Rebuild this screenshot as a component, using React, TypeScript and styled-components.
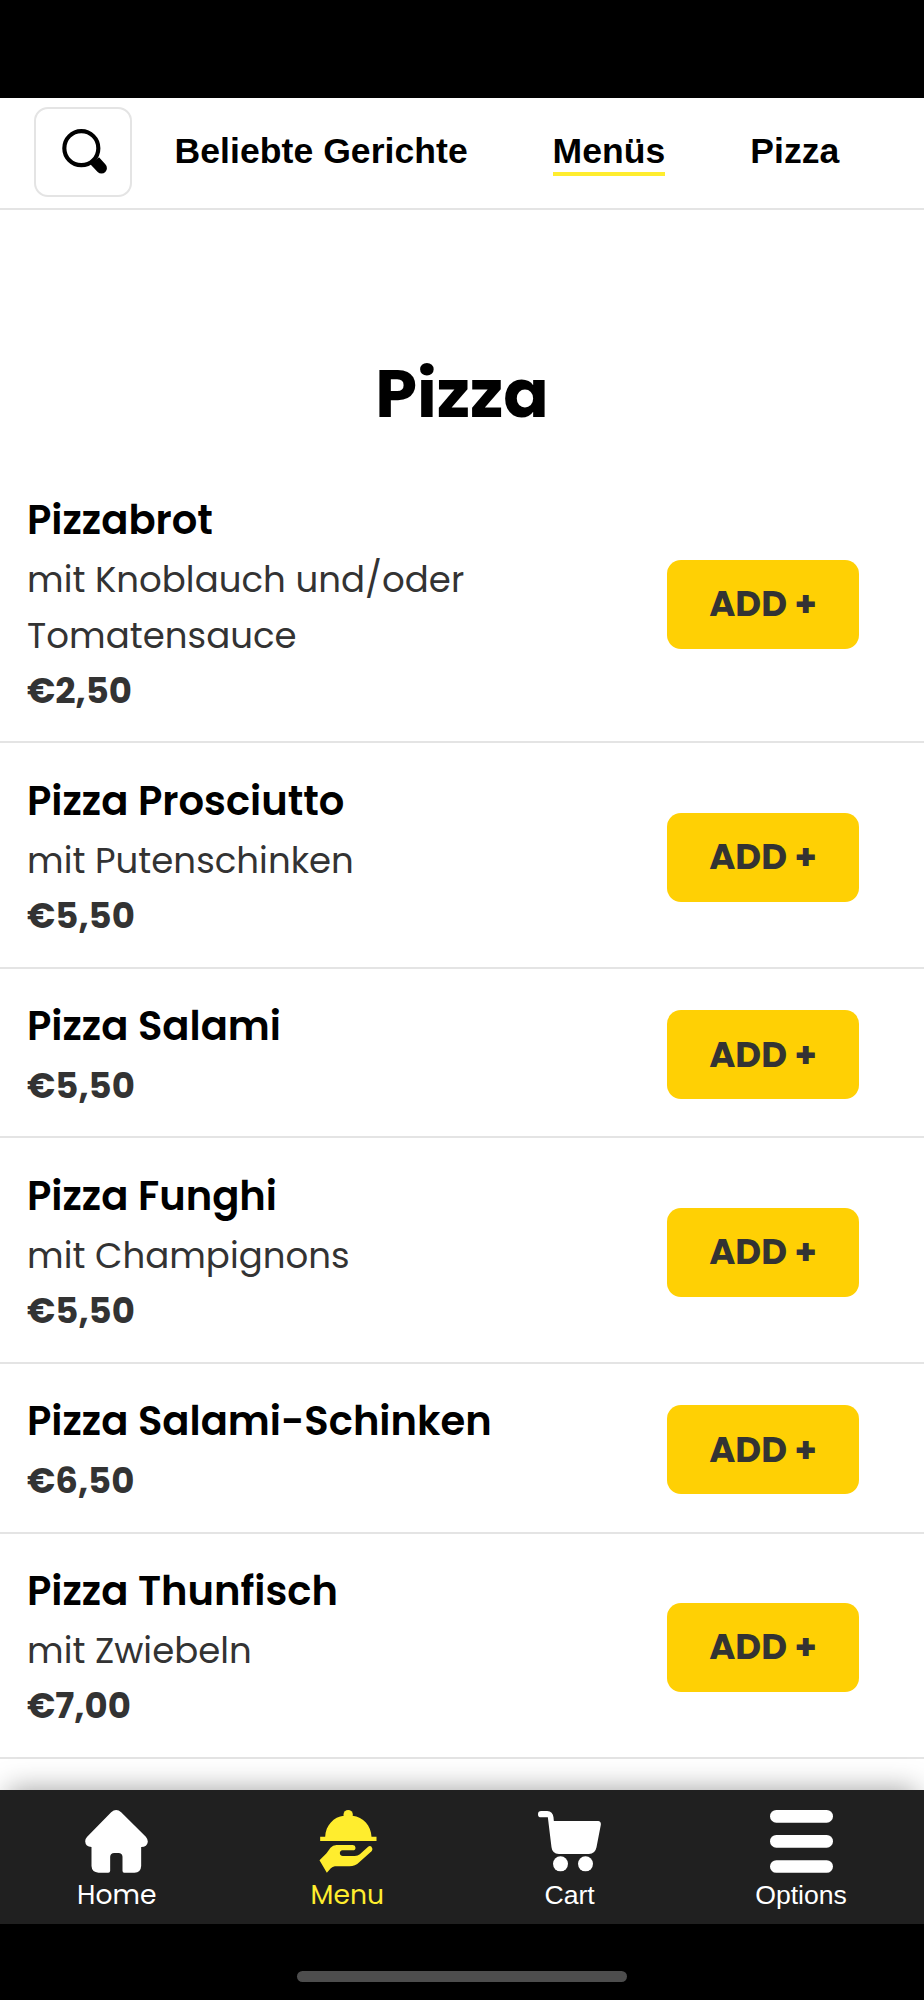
import React from "react";
import styled, { createGlobalStyle } from "styled-components";

const GlobalStyle = createGlobalStyle`
  * { box-sizing: border-box; }
  body { margin: 0; background: #fff; }
`;

const poppins = `Poppins, Inter, sans-serif`;
const helvetica = `"Liberation Sans", Arial, sans-serif`;

const Screen = styled.div`
  display: flex;
  flex-direction: column;
  width: 924px;
  height: 2000px;
  overflow: hidden;
  background: #fff;
  font-family: ${poppins};
`;

const StatusBar = styled.div`
  flex: none;
  height: 98px;
  background: #000;
`;

const Header = styled.header`
  flex: none;
  display: flex;
  align-items: flex-start;
  height: 112px;
  padding: 9px 0 0 34px;
  border-bottom: 2px solid #e4e4e4;
`;

const SearchButton = styled.button`
  display: flex;
  align-items: center;
  justify-content: center;
  width: 98px;
  height: 90px;
  padding: 0 0 1px 3px;
  border: 2px solid #e4e4e4;
  border-radius: 14px;
  background: #fff;
`;

const Categories = styled.nav`
  display: flex;
  gap: 84.8px;
  padding: 23px 0 0 42.5px;
`;

const Category = styled.a<{ $active?: boolean }>`
  height: 46px;
  border-bottom: 4px solid ${(p) => (p.$active ? "#ffed2e" : "transparent")};
  color: #000;
  font: 700 35.54px/42px ${helvetica};
  letter-spacing: 0.06px;
  white-space: nowrap;
`;

const Content = styled.main`
  flex: 1;
  min-height: 0;
  overflow: hidden;
`;

const SectionTitle = styled.h2`
  margin: 0;
  height: 252.3px;
  padding-top: 134px;
  color: #000;
  font-weight: 700;
  font-size: 67px;
  line-height: 100px;
  text-align: center;
`;

const Dish = styled.article`
  display: flex;
  align-items: center;
  justify-content: space-between;
  padding: 25.5px 65px 23.2px 27px;
  border-bottom: 2px solid #e4e4e4;
`;

const DishInfo = styled.div`
  width: 520px;
  color: #333;
  font-size: 35.54px;
  line-height: 55.7px;
`;

const DishName = styled.h3`
  margin: 0;
  color: #000;
  font-weight: 600;
  font-size: 40.1px;
  line-height: 64.3px;
`;

const Description = styled.p`
  margin: 0;
  letter-spacing: 0.04px;
`;

const Price = styled.div`
  margin-top: -1px;
  font-weight: 700;
`;

const AddButton = styled.button`
  width: 192px;
  height: 89px;
  margin-top: 2px;
  padding: 0;
  border: 0;
  border-radius: 14px;
  background: #ffd004;
  color: #333;
  font: 700 35.54px/88px ${poppins};
`;

const TabBar = styled.footer`
  flex: none;
  position: relative;
  display: flex;
  justify-content: space-around;
  height: 134px;
  padding-top: 20px;
  background: #202020;
  box-shadow: 0 -9px 26px -8px rgba(0, 0, 0, 0.36);
`;

const Tab = styled.a<{ $active?: boolean; $plain?: boolean }>`
  display: flex;
  flex-direction: column;
  align-items: center;
  color: ${(p) => (p.$active ? "#ffed2e" : "#fff")};
  font: 400 26.6px/38px ${(p) => (p.$plain ? helvetica : poppins)};

  svg {
    display: block;
    margin-bottom: ${(p) => (p.$plain ? "3px" : "2.5px")};
    fill: currentColor;
  }
`;

const HomeArea = styled.div`
  flex: none;
  display: flex;
  justify-content: center;
  height: 76px;
  padding-top: 47px;
  background: #000;
`;

const HomeIndicator = styled.div`
  width: 330px;
  height: 11px;
  border-radius: 6px;
  background: #4d4d4d;
`;

const SearchIcon = () => (
  <svg width="45" height="45" viewBox="187 148 135 135">
    <path d="M272 254 L298 233 L317 254 A16 16 0 0 1 294 277 Z" />
    <circle cx="245" cy="205.500" r="51" fill="#fff" stroke="#000" strokeWidth="12.500" />
  </svg>
);

const HomeIcon = () => (
  <svg width="63" height="63" viewBox="254.500 210 189 189">
    <path d="M333 217 Q348 203 363 217 L437 290 Q443 297 443 305 Q441 321 423 321 V378 Q422 398 403 398 H372 Q367 398 367 392 V350 Q366 339 355 339 H342 Q331 339 330 350 V392 Q330 398 324 398 H295 Q275 397 274 378 V321 Q256 321 255 304 Q255 296 261 290 Z" />
  </svg>
);

const MenuIcon = () => (
  <svg width="63" height="63" viewBox="949.500 210 189 189">
    <circle cx="1046" cy="224" r="14" />
    <path d="M977 290 C978 256 1003 230 1033 227 H1059 C1091 230 1115 257 1116 290 H1131 V303 H962 V290 Z" />
    <path d="M960 361 L981 340 L993 323 Q1000 315 1011 315 H1060 Q1068 316 1068 323 Q1068 331 1060 331 H1029 Q1021 332 1021 340 Q1022 348 1030 348 H1066 Q1075 348 1081 343 L1105 321 Q1111 316 1116 320 Q1121 326 1117 333 L1080 366 Q1067 379 1050 379 H1006 Q999 380 994 385 L982 398 Z" />
  </svg>
);

const CartIcon = () => (
  <svg width="63" height="63" viewBox="227.500 210 189 189">
    <path d="M237 213 H255 Q272 214 274 232 L275 243 H408 Q417 244 416 254 L403 322 Q399 342 380 342 H290 Q270 341 268 322 L257 232 H237 A9.500 9.500 0 0 1 237 213 Z" />
    <circle cx="295" cy="371.500" r="22.500" />
    <circle cx="370" cy="371.500" r="22.500" />
  </svg>
);

const OptionsIcon = () => (
  <svg width="63" height="63" viewBox="0 0 189 189">
    <rect width="189" height="38" rx="19" />
    <rect y="75" width="189" height="38" rx="19" />
    <rect y="150.500" width="189" height="38" rx="19" />
  </svg>
);

const dishes = [
  { name: "Pizzabrot", description: "mit Knoblauch und/oder Tomatensauce", price: "€2,50" },
  { name: "Pizza Prosciutto", description: "mit Putenschinken", price: "€5,50" },
  { name: "Pizza Salami", price: "€5,50" },
  { name: "Pizza Funghi", description: "mit Champignons", price: "€5,50" },
  { name: "Pizza Salami-Schinken", price: "€6,50" },
  { name: "Pizza Thunfisch", description: "mit Zwiebeln", price: "€7,00" },
];

export default function App() {
  return (
    <Screen>
      <GlobalStyle />
      <StatusBar />
      <Header>
        <SearchButton aria-label="Suche">
          <SearchIcon />
        </SearchButton>
        <Categories>
          <Category>Beliebte Gerichte</Category>
          <Category $active>Menüs</Category>
          <Category>Pizza</Category>
        </Categories>
      </Header>
      <Content>
        <SectionTitle>Pizza</SectionTitle>
        {dishes.map((dish) => (
          <Dish key={dish.name}>
            <DishInfo>
              <DishName>{dish.name}</DishName>
              {dish.description && <Description>{dish.description}</Description>}
              <Price>{dish.price}</Price>
            </DishInfo>
            <AddButton>ADD +</AddButton>
          </Dish>
        ))}
      </Content>
      <TabBar>
        <Tab>
          <HomeIcon />
          Home
        </Tab>
        <Tab $active>
          <MenuIcon />
          Menu
        </Tab>
        <Tab $plain>
          <CartIcon />
          Cart
        </Tab>
        <Tab $plain>
          <OptionsIcon />
          Options
        </Tab>
      </TabBar>
      <HomeArea>
        <HomeIndicator />
      </HomeArea>
    </Screen>
  );
}
